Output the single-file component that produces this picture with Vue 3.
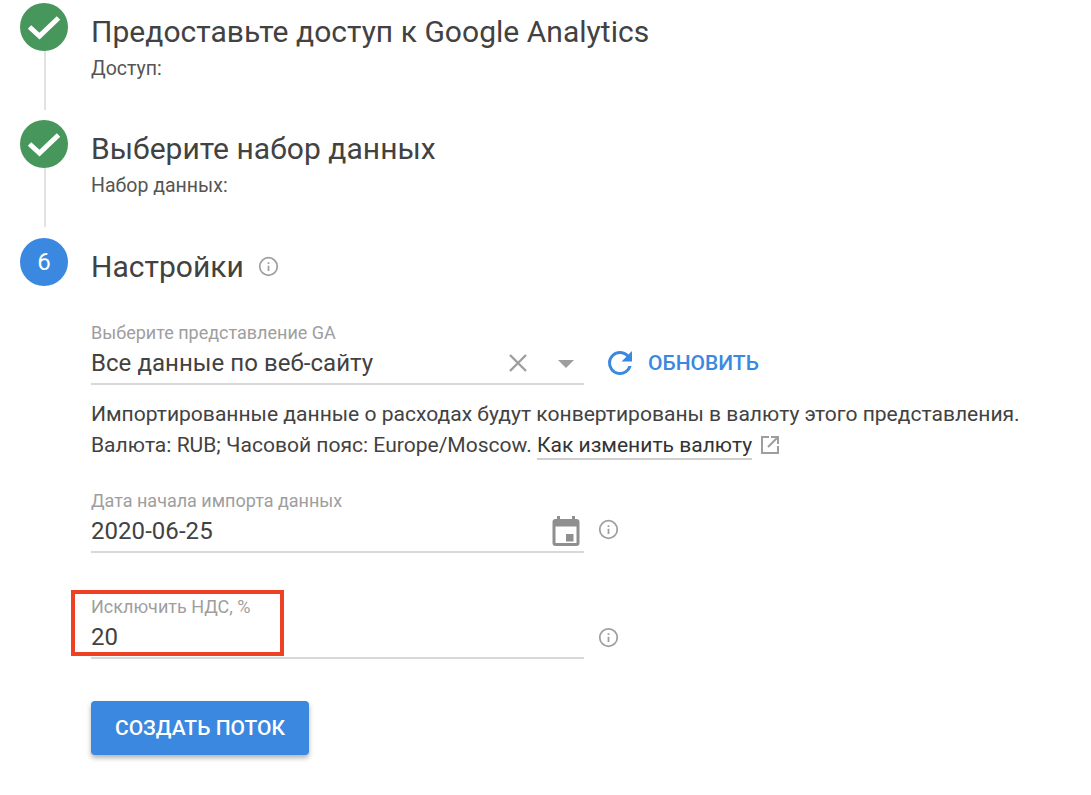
<script setup>
const done = [
  { title: 'Предоставьте доступ к Google Analytics', sub: 'Доступ:' },
  { title: 'Выберите набор данных', sub: 'Набор данных:' },
]
</script>

<template>
  <main class="page">
    <section v-for="s in done" :key="s.title" class="step">
      <div class="rail">
        <span class="badge green">
          <svg width="48" height="48" viewBox="0 0 48 48"><path d="M9.5 24 L19.5 33 L38.5 15" fill="none" stroke="#fff" stroke-width="5"/></svg>
        </span>
        <span class="line"></span>
      </div>
      <div class="body">
        <h2 class="title">{{ s.title }}</h2>
        <p class="sub">{{ s.sub }}</p>
      </div>
    </section>

    <section class="step last">
      <div class="rail">
        <span class="badge blue">6</span>
      </div>
      <div class="body">
        <h2 class="title with-info">Настройки
          <svg class="info big" viewBox="0 0 24 24"><circle cx="12" cy="12" r="10" fill="none" stroke="#9e9e9e" stroke-width="2"/><path d="M11 11h2v6h-2zM11 7h2v2h-2z" fill="#9e9e9e"/></svg>
        </h2>

        <div class="row first-field">
          <div class="field view">
            <label>Выберите представление GA</label>
            <div class="control">
              <span class="value">Все данные по веб-сайту</span>
              <svg class="clear" width="20" height="20" viewBox="0 0 20 20"><path d="M2 2 L18 18 M18 2 L2 18" stroke="#9e9e9e" stroke-width="2.4" fill="none"/></svg>
              <span class="caret"></span>
            </div>
          </div>
          <button class="refresh" type="button">
            <svg width="36" height="36" viewBox="0 0 24 24"><path fill="#3a88df" d="M17.65 6.35A7.96 7.96 0 0 0 12 4a8 8 0 1 0 7.73 10h-2.08A6 6 0 1 1 12 6c1.66 0 3.14.69 4.22 1.78L13 11h7V4l-2.35 2.35z"/></svg>
            <span>ОБНОВИТЬ</span>
          </button>
        </div>

        <p class="note">Импортированные данные о расходах будут конвертированы в валюту этого представления.<br>Валюта: RUB; Часовой пояс: Europe/Moscow. <a class="link">Как изменить валюту</a>
          <svg class="ext" width="20" height="20" viewBox="0 0 20 20"><path d="M9 2H2v16h16v-7M11 2h7v7M18 2L8 12" fill="none" stroke="#9e9e9e" stroke-width="2"/></svg>
        </p>

        <div class="row date-row">
          <div class="field view">
            <label>Дата начала импорта данных</label>
            <div class="control">
              <span class="value">2020-06-25</span>
              <svg class="cal" width="36" height="36" viewBox="0 0 24 24"><path fill="#8f8f8f" d="M19 3h-1V1h-2v2H8V1H6v2H5a2 2 0 0 0-2 2v14a2 2 0 0 0 2 2h14a2 2 0 0 0 2-2V5a2 2 0 0 0-2-2zm0 16H5V8h14v11zm-2-6h-5v5h5v-5z" transform="translate(0 1)"/></svg>
            </div>
          </div>
          <svg class="info side" viewBox="0 0 24 24"><circle cx="12" cy="12" r="10" fill="none" stroke="#9e9e9e" stroke-width="2"/><path d="M11 11h2v6h-2zM11 7h2v2h-2z" fill="#9e9e9e"/></svg>
        </div>

        <div class="row vat-row">
          <div class="field view">
            <label>Исключить НДС, %</label>
            <div class="control plain">
              <span class="value">20</span>
            </div>
            <span class="mark"></span>
          </div>
          <svg class="info side vat-info" viewBox="0 0 24 24"><circle cx="12" cy="12" r="10" fill="none" stroke="#9e9e9e" stroke-width="2"/><path d="M11 11h2v6h-2zM11 7h2v2h-2z" fill="#9e9e9e"/></svg>
        </div>

        <button class="create" type="button">СОЗДАТЬ ПОТОК</button>
      </div>
    </section>
  </main>
</template>

<style>
html, body { margin: 0; background: #fff; }
</style>

<style scoped>
.page {
  width: 1091px;
  height: 795px;
  box-sizing: border-box;
  padding: 3px 0 0 20px;
  overflow: hidden;
  font-family: Roboto, "Liberation Sans", sans-serif;
  color: #424242;
}
.step { display: flex; height: 117.4px; }
.step.last { height: auto; }
.rail { width: 71px; flex: none; display: flex; flex-direction: column; align-items: flex-start; }
.badge {
  width: 48px; height: 48px; border-radius: 50%; flex: none;
  display: flex; align-items: center; justify-content: center;
  color: #fff; font-size: 24px;
}
.green { background: #47965c; }
.blue { background: #3a88df; }
.line { width: 2px; height: 59px; margin-left: 24px; background: #e2e2e2; }
.body { flex: 1; min-width: 0; }
.title { margin: 0; font-size: 30px; font-weight: 400; line-height: 34px; padding-top: 12px; letter-spacing: .03px; }
.sub { margin: 9px 0 0; font-size: 19.5px; line-height: 22px; color: #555; }
.with-info { display: flex; align-items: center; gap: 14px; }
.info { display: block; flex: none; }
.info.big { width: 21px; height: 21px; }
.info.side { width: 21px; height: 21px; }
.row { display: flex; align-items: flex-start; }
.first-field { margin-top: 38px; }
.field { position: relative; }
.view { width: 493px; }
label { display: block; font-size: 18px; line-height: 21px; color: #9e9e9e; }
.control {
  display: flex; align-items: center; height: 42px; box-sizing: border-box;
  border-bottom: 2px solid #d8d8d8;
}
.control.plain { height: 42px; }
.value { flex: 1; font-size: 24px; line-height: 28px; color: #424242; letter-spacing: .05px; }
.clear { flex: none; margin-right: 30px; }
.caret {
  flex: none; margin: 2px 10px 0 0; width: 0; height: 0;
  border-left: 8px solid transparent; border-right: 8px solid transparent; border-top: 8px solid #9e9e9e;
}
.refresh {
  display: flex; align-items: center; gap: 10px; margin: 23px 0 0 18px; padding: 0;
  background: none; border: 0; font: 500 21px Roboto, sans-serif; color: #3a88df;
}
.note { margin: 13px 0 0; font-size: 21.05px; line-height: 31.5px; color: #424242; }
.link { color: #333; border-bottom: 2px solid #cfcfcf; padding-bottom: 1px; }
.ext { vertical-align: -3px; margin-left: 8px; }
.date-row { margin-top: 29px; }
.cal { flex: none; margin-right: 0; }
.side { margin: 29px 0 0 14px; }
.side.vat-info { margin-top: 31px; }
.vat-row { margin-top: 43px; }
.mark {
  position: absolute; left: -20px; top: -6px; width: 213px; height: 66px;
  box-sizing: border-box; border: 4px solid #ee4023;
}
.create {
  display: block; margin-top: 42px; width: 218px; height: 54px; border: 0; border-radius: 4px; padding: 1px 0 0;
  background: #3a88df; color: #fff; font: 500 21px Roboto, sans-serif;
  box-shadow: 0 3px 5px rgba(0,0,0,.3);
}
</style>
